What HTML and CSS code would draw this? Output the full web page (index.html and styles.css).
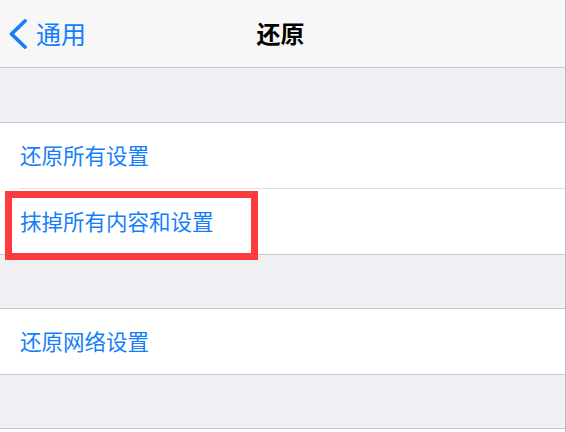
FILE: index.html
```html
<!DOCTYPE html>
<html lang="zh-CN">
<head>
    <meta charset="UTF-8">
    <title>还原</title>
    <link rel="stylesheet" href="styles.css">
</head>
<body>
<div class="page">
    <div class="navbar">
        <a href="javascript:" class="back">
            <svg class="chevron" width="20" height="30" viewBox="0 0 20 30">
                <path d="M17 2 L3.5 15 L17 28" fill="none" stroke="#157efb" stroke-width="3.8" stroke-linecap="round" stroke-linejoin="round"/>
            </svg>
            <span>通用</span>
        </a>
        <div class="title">还原</div>
    </div>

    <div class="gap"></div>
    <div class="group">
        <div class="cell">还原所有设置</div>
        <div class="cell marked">
            抹掉所有内容和设置
            <div class="mark"></div>
        </div>
    </div>

    <div class="gap"></div>
    <div class="group">
        <div class="cell">还原网络设置</div>
    </div>

    <div class="gap"></div>
    <div class="group tail"></div>
</div>
</body>
</html>
```

FILE: styles.css
```css
*{
    padding: 0;
    margin: 0;
    box-sizing: border-box;
}
body{
    font-family: "Noto Sans CJK SC", "Liberation Sans", sans-serif;
    background: #ffffff;
}
.page{
    width: 566px;
    height: 432px;
    overflow: hidden;
    background: #efeff4;
    border-right: 1px solid #bcbcc0;
}
.navbar{
    height: 68px;
    background: #f7f7f8;
    border-bottom: 1px solid #c8c7cc;
    display: flex;
    align-items: center;
    justify-content: center;
    position: relative;
}
.back{
    position: absolute;
    left: 8px;
    top: 0;
    height: 67px;
    padding-bottom: 2px;
    display: flex;
    align-items: center;
    gap: 8px;
    color: #157efb;
    text-decoration: none;
    font-size: 25px;
}
.chevron{
    margin-top: 3px;
}
.title{
    font-size: 24px;
    font-weight: bold;
    color: #000;
    margin-left: -4px;
    padding-bottom: 2px;
}
.gap{
    height: 54px;
}
.group + .gap{
    height: 53px;
}
.group{
    background: #fff;
    border-top: 1px solid #c8c7cc;
    border-bottom: 1px solid #c8c7cc;
}
.cell{
    height: 65px;
    padding-left: 20px;
    padding-bottom: 3px;
    display: flex;
    align-items: center;
    font-size: 21.5px;
    color: #157efb;
    position: relative;
}
.cell + .cell{
    border-top: 1px solid #e0e0e4;
    margin-left: 20px;
    padding-left: 0;
}
.marked{
    height: 66px;
}
.mark{
    position: absolute;
    left: -15px;
    top: 2px;
    width: 253px;
    height: 69px;
    border: 7px solid #fc3b3e;
}
.tail{
    height: 10px;
    border-bottom: none;
}
```
